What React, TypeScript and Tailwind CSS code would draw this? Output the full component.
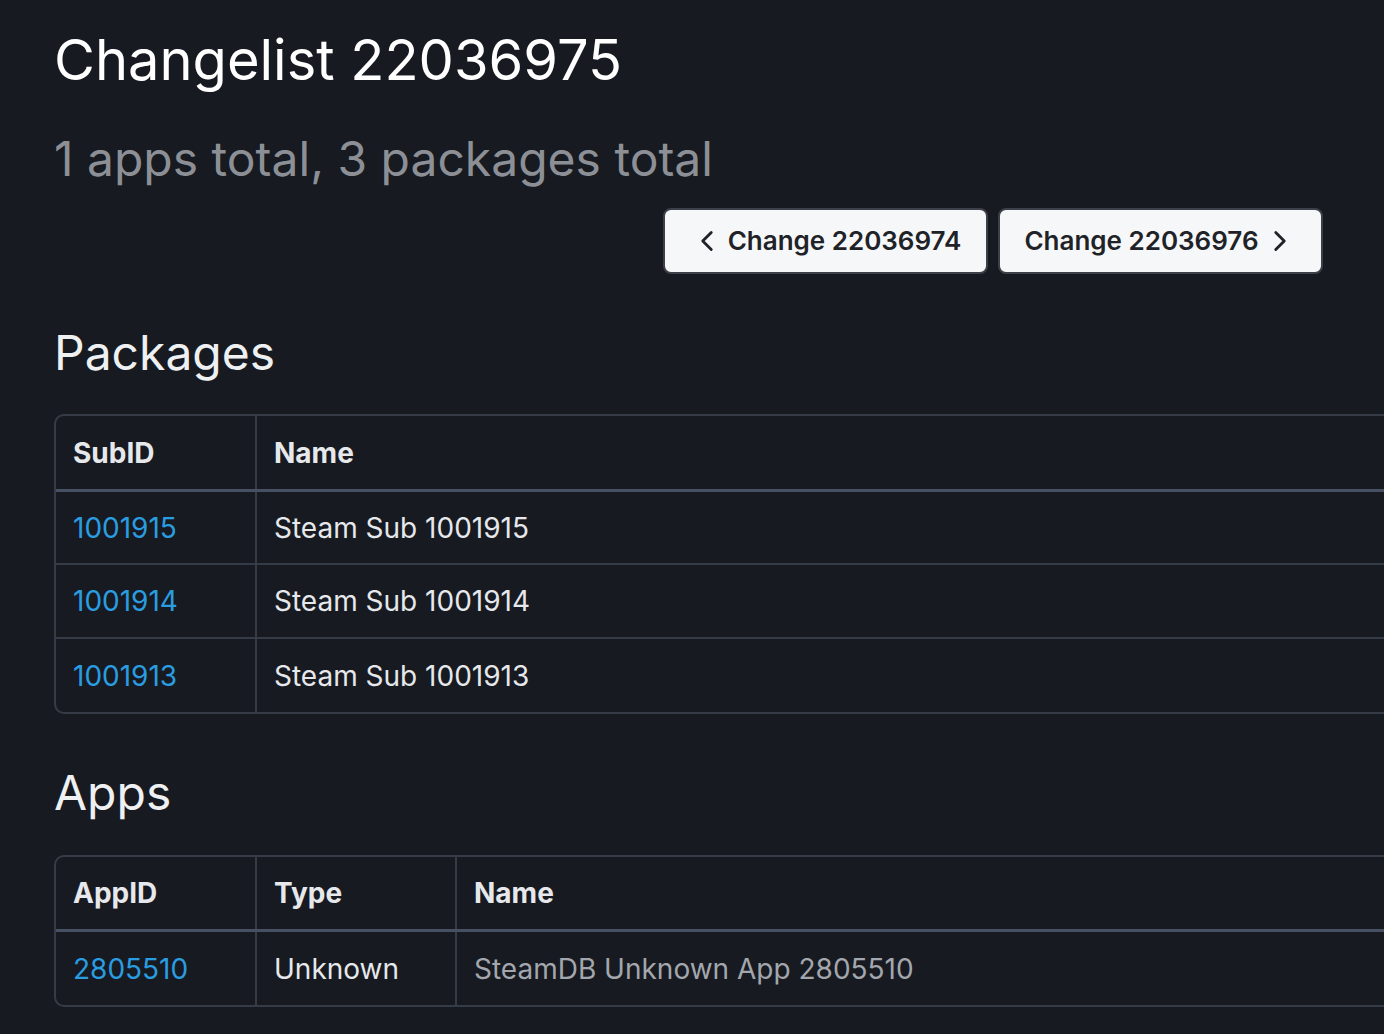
import { ChevronLeft, ChevronRight } from 'lucide-react';

interface Pkg {
  subId: number;
  name: string;
}

interface AppRow {
  appId: number;
  type: string;
  name: string;
}

const packages: Pkg[] = [
  { subId: 1001915, name: 'Steam Sub 1001915' },
  { subId: 1001914, name: 'Steam Sub 1001914' },
  { subId: 1001913, name: 'Steam Sub 1001913' },
];

const apps: AppRow[] = [{ appId: 2805510, type: 'Unknown', name: 'SteamDB Unknown App 2805510' }];

const th = 'h-[74px] px-[17px] text-left font-bold text-[28px] text-[#e6e8eb] border-b-[3px] border-[#485163]';
const td = 'h-[74px] px-[17px] text-[28px]';
const divider = ' border-r-2 border-r-[#363c47]';
const btn =
  'flex h-[66px] w-[325px] items-center justify-center gap-[4px] rounded-[8px] border-2 border-[#3b4049] bg-[#f6f7f9] text-[26px] font-semibold text-[#1f2328]';

export default function App() {
  return (
    <div
      className="h-[1034px] w-[1384px] overflow-hidden bg-[#171a21] text-white"
      style={{ fontFamily: 'Inter, "Noto Sans", sans-serif' }}
    >
      <div className="pl-[54px] pt-[27px]">
        <h1 className="text-[56px] leading-[1.2] font-normal text-white">Changelist 22036975</h1>
        <div className="mt-[36px] text-[48px] leading-[1.2] text-[#8c9096]">1 apps total, 3 packages total</div>

        {/* navegación entre changelists */}
        <div className="mt-[20px] flex justify-end gap-[10px] pr-[61px]">
          <button className={btn}>
            <ChevronLeft className="h-[34px] w-[34px]" strokeWidth={2} />
            Change 22036974
          </button>
          <button className={btn}>
            Change 22036976
            <ChevronRight className="h-[34px] w-[34px]" strokeWidth={2} />
          </button>
        </div>

        <h2 className="mt-[50px] text-[48px] leading-[1.2] text-[#eef0f2]">Packages</h2>
        <div className="mt-[33px] w-[1400px] overflow-hidden rounded-[10px] border-2 border-[#363c47]">
          <table className="w-full border-collapse">
            <thead>
              <tr>
                <th className={th + ' w-[200px]' + divider}>SubID</th>
                <th className={th}>Name</th>
              </tr>
            </thead>
            <tbody>
              {packages.map((p, i) => (
                <tr key={p.subId} className={i > 0 ? 'border-t-2 border-[#363c47]' : ''}>
                  <td className={td + ' text-[#2a9de0]' + divider}>{p.subId}</td>
                  <td className={td + ' text-[#e6e8eb]'}>{p.name}</td>
                </tr>
              ))}
            </tbody>
          </table>
        </div>

        <h2 className="mt-[50px] text-[48px] leading-[1.2] text-[#eef0f2]">Apps</h2>
        <div className="mt-[33px] w-[1400px] overflow-hidden rounded-[10px] border-2 border-[#363c47]">
          <table className="w-full border-collapse">
            <thead>
              <tr>
                <th className={th + ' w-[200px]' + divider}>AppID</th>
                <th className={th + ' w-[200px]' + divider}>Type</th>
                <th className={th}>Name</th>
              </tr>
            </thead>
            <tbody>
              {apps.map((a) => (
                <tr key={a.appId}>
                  <td className={td + ' text-[#2a9de0]' + divider}>{a.appId}</td>
                  <td className={td + ' text-[#e6e8eb]' + divider}>{a.type}</td>
                  <td className={td + ' text-[#a3a7ad]'}>{a.name}</td>
                </tr>
              ))}
            </tbody>
          </table>
        </div>
      </div>
    </div>
  );
}
